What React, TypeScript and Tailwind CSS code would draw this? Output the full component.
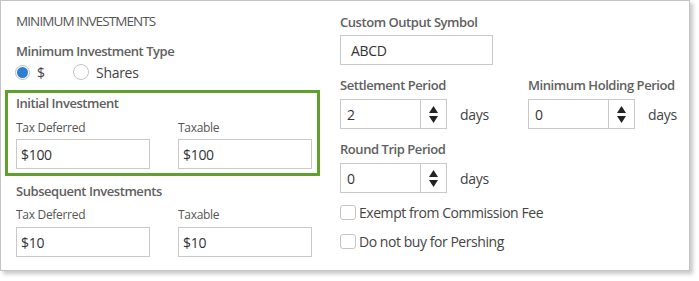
import React from "react";

const font = { fontFamily: '"Open Sans", "Noto Sans", sans-serif' };

function TextInput({ value, w, pl }: { value: string; w: string; pl: string }) {
  return (
    <div className={`${w} ${pl} h-[30px] border border-[#c9c9c9] bg-white flex items-center text-[14px] text-[#333] tracking-[-0.3px]`}>
      {value}
    </div>
  );
}

function Spinner({ value }: { value: string }) {
  return (
    <div className="w-[107px] h-[30px] border border-[#c9c9c9] bg-white flex">
      <div className="flex-1 flex items-center pl-[6px] text-[14px] text-[#333]">{value}</div>
      <div className="w-[26px] border-l border-[#c9c9c9] flex items-center justify-center">
        <svg width="9" height="17" viewBox="0 0 9 17">
          <polygon points="4.5,0 9,7 0,7" fill="#222" />
          <polygon points="0,10 9,10 4.5,17" fill="#222" />
        </svg>
      </div>
    </div>
  );
}

function Label({ children, cls = "" }: { children: React.ReactNode; cls?: string }) {
  return (
    <div className={`h-[20px] flex items-center text-[13px] font-semibold text-[#606060] tracking-[-0.45px] whitespace-nowrap ${cls}`}>
      {children}
    </div>
  );
}

function SubLabel({ children }: { children: React.ReactNode }) {
  return (
    <div className="h-[18px] flex items-center text-[12px] text-[#555] tracking-[-0.3px] whitespace-nowrap">
      {children}
    </div>
  );
}

function Checkbox({ label, cls = "" }: { label: string; cls?: string }) {
  return (
    <div className={`h-[20px] flex items-center ${cls}`}>
      <div className="w-[16px] h-[15px] border border-[#c4c4c4] rounded-[3px] bg-white" />
      <span className="ml-[3px] text-[14px] text-[#444] tracking-[-0.45px] whitespace-nowrap">{label}</span>
    </div>
  );
}

function Days() {
  return <span className="ml-[13px] text-[14px] text-[#444] tracking-[-0.3px]">days</span>;
}

export default function App() {
  return (
    <div className="w-[699px] h-[281px] bg-white" style={font}>
      <div className="w-[690px] h-[271px] border border-[#c4c4c4] bg-white shadow-[3px_3px_4px_rgba(0,0,0,0.22)] flex">
        {/* Left column */}
        <div className="w-[319px] pl-[4px] flex flex-col">
          <div className="pl-[11px] mt-[10px] h-[20px] flex items-center text-[13.5px] text-[#555] tracking-[-0.9px] whitespace-nowrap">
            MINIMUM INVESTMENTS
          </div>
          <Label cls="pl-[11px] mt-[11px]">Minimum Investment Type</Label>
          <div className="pl-[10px] h-[20px] flex items-center text-[14px] text-[#444]">
            <div className="w-[15px] h-[15px] rounded-full border border-[#bdbdbd] flex items-center justify-center bg-white">
              <div className="w-[11px] h-[11px] rounded-full bg-[#2e7dd1]" />
            </div>
            <span className="ml-[7px]">$</span>
            <div className="ml-[28px] w-[16px] h-[16px] rounded-full border border-[#c4c4c4] bg-white" />
            <span className="ml-[7px] tracking-[-0.3px]">Shares</span>
          </div>
          <div className="mt-[8px] w-[315px] h-[86px] border-[3px] border-[#5ea12b] pl-[8px] flex flex-col">
            <Label cls="mt-[1px]">Initial Investment</Label>
            <div className="mt-[5px] flex gap-[28px]">
              <div className="w-[134px] flex flex-col">
                <SubLabel>Tax Deferred</SubLabel>
                <div className="mt-[2px]">
                  <TextInput value="$100" w="w-[134px]" pl="pl-[4px]" />
                </div>
              </div>
              <div className="w-[134px] flex flex-col">
                <SubLabel>Taxable</SubLabel>
                <div className="mt-[2px]">
                  <TextInput value="$100" w="w-[134px]" pl="pl-[4px]" />
                </div>
              </div>
            </div>
          </div>
          <div className="pl-[11px] flex flex-col">
            <Label cls="mt-[6px]">Subsequent Investments</Label>
            <div className="mt-[4px] flex gap-[28px]">
              <div className="w-[134px] flex flex-col">
                <SubLabel>Tax Deferred</SubLabel>
                <div className="mt-[3px]">
                  <TextInput value="$10" w="w-[134px]" pl="pl-[4px]" />
                </div>
              </div>
              <div className="w-[134px] flex flex-col">
                <SubLabel>Taxable</SubLabel>
                <div className="mt-[3px]">
                  <TextInput value="$10" w="w-[134px]" pl="pl-[4px]" />
                </div>
              </div>
            </div>
          </div>
        </div>
        {/* Right column */}
        <div className="ml-[20px] flex flex-col">
          <Label cls="mt-[12px]">Custom Output Symbol</Label>
          <div className="mt-[2px]">
            <TextInput value="ABCD" w="w-[153px]" pl="pl-[10px]" />
          </div>
          <div className="mt-[11px] flex">
            <div className="w-[188px] flex flex-col">
              <Label>Settlement Period</Label>
              <div className="mt-[3px] flex items-center">
                <Spinner value="2" />
                <Days />
              </div>
            </div>
            <div className="flex flex-col">
              <Label>Minimum Holding Period</Label>
              <div className="mt-[3px] flex items-center">
                <Spinner value="0" />
                <Days />
              </div>
            </div>
          </div>
          <Label cls="mt-[11px]">Round Trip Period</Label>
          <div className="mt-[3px] flex items-center">
            <Spinner value="0" />
            <Days />
          </div>
          <Checkbox label="Exempt from Commission Fee" cls="mt-[9px]" />
          <Checkbox label="Do not buy for Pershing" cls="mt-[9px]" />
        </div>
      </div>
    </div>
  );
}
